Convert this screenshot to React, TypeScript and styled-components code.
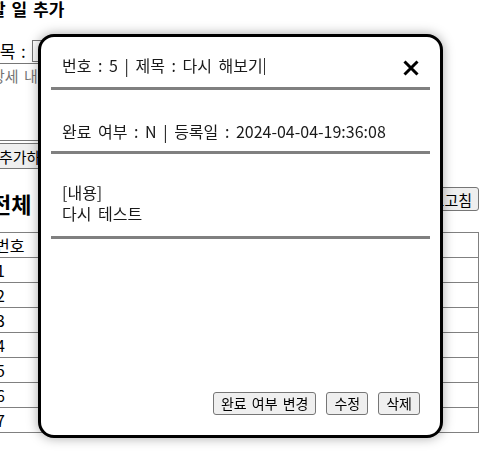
import React from "react";
import styled, { createGlobalStyle } from "styled-components";

const Global = createGlobalStyle`
  html, body { margin: 0; padding: 0; background: #fff; overflow: hidden; }
  body { font-family: "Noto Sans CJK KR", "Noto Sans", sans-serif; color: #000; }
`;

const Page = styled.div`
  margin-left: -12px;
  width: 491px;
  display: flex;
  flex-direction: column;
`;

const AddTitle = styled.h3`
  margin: 0 0 0 2px;
  font-size: 17px;
  line-height: 18px;
  font-weight: 700;
  word-spacing: 2px;
`;

const FieldRow = styled.div`
  margin-top: 22px;
  margin-left: -4px;
  display: flex;
  align-items: center;
  gap: 6px;
  font-size: 17px;
  line-height: 20px;
  word-spacing: 2px;
`;

const TextInput = styled.input`
  width: 160px;
  height: 18px;
  border: 1px solid #767676;
`;

const Area = styled.textarea`
  margin-top: 1px;
  margin-left: -6px;
  width: 200px;
  height: 74px;
  padding: 1px 8px;
  border: 1px solid #767676;
  font-family: "Noto Sans CJK KR", sans-serif;
  font-size: 15px;
  word-spacing: 2px;
  resize: none;
  &::placeholder { color: #757575; }
`;

const PlainButton = styled.button`
  font-family: "Noto Sans CJK KR", sans-serif;
  font-size: 14px;
  line-height: 17px;
  height: 23px;
  padding: 0 6px;
  border: 1px solid #767676;
  border-radius: 3px;
  background: #efefef;
  color: #000;
  white-space: nowrap;
  word-spacing: 2px;
`;

const AddButton = styled(PlainButton)`
  margin-top: 2px;
  align-self: flex-start;
  height: 26px;
  margin-left: 4px;
  font-size: 15px;
`;

const ListHead = styled.div`
  margin-top: 21px;
  display: flex;
  justify-content: space-between;
  align-items: center;
  height: 26px;
`;

const ListTitle = styled.h2`
  margin: 0 0 0 3px;
  font-size: 22px;
  line-height: 26px;
  font-weight: 700;
  word-spacing: 3px;
`;

const RefreshButton = styled(PlainButton)`
  height: 24px;
  margin-top: -8px;
  font-size: 15px;
`;

const Table = styled.table`
  margin-top: 16px;
  margin-left: 4px;
  border-collapse: collapse;
  font-size: 16px;
`;

const Th = styled.th`
  border: 1px solid #808080;
  height: 22px;
  padding: 0 2px;
  font-weight: 400;
  text-align: left;
`;

const Td = styled.td`
  border: 1px solid #808080;
  height: 23px;
  padding: 0 2px;
  white-space: nowrap;
`;

const Num = styled(Td)`
  padding-left: 3px;
`;

const Link = styled.a`
  color: #0000ee;
  text-decoration: underline;
`;

const Modal = styled.div`
  position: fixed;
  left: 38px;
  top: 34px;
  width: 399px;
  height: 398px;
  border: 3px solid #000;
  border-radius: 16px;
  background: #fff;
  box-shadow: 0 0 12px rgba(0, 0, 0, 0.35);
  display: flex;
  flex-direction: column;
  font-size: 16px;
  color: #1a1a1a;
  word-spacing: 3px;
`;

const Header = styled.div`
  height: 50px;
  box-sizing: border-box;
  padding: 18px 21px 12px 21px;
  display: flex;
  align-items: center;
  justify-content: space-between;
  line-height: 20px;
`;

const Caret = styled.span`
  display: inline-block;
  width: 1px;
  height: 17px;
  background: #333;
  vertical-align: -3px;
  margin-left: 1px;
`;

const Close = styled.button`
  border: 0;
  background: none;
  padding: 0;
  width: 16px;
  height: 16px;
  margin-top: 6px;
  margin-right: 0;
  display: flex;
`;

const Divider = styled.div`
  height: 3px;
  margin: 0 10px;
  background: #808080;
`;

const Section = styled.div<{ $top: number; $bottom: number }>`
  padding: ${(p) => p.$top}px 21px ${(p) => p.$bottom}px 21px;
  line-height: 21px;
`;

const Spacer = styled.div`
  flex: 1;
`;

const Actions = styled.div`
  display: flex;
  justify-content: flex-end;
  gap: 10px;
  padding: 0 20px 20px 0;
`;

const ActionButton = styled(PlainButton)`
  font-size: 14px;
  padding: 0 7px;
  word-spacing: 2px;
`;

const rows = [
  ["1", "테스트"],
  ["2", "테스트"],
  ["3", "테스트"],
  ["4", "잡일"],
  ["5", "다시 해보기"],
  ["6", "공부"],
  ["7", "테스트"],
];

export default function App() {
  return (
    <>
      <Global />
      <Page>
        <AddTitle>할 일 추가</AddTitle>
        <FieldRow>
          <span>제목 :</span>
          <TextInput />
        </FieldRow>
        <Area placeholder="상세 내용" />
        <AddButton>추가하기</AddButton>
        <ListHead>
          <ListTitle>전체 할 일</ListTitle>
          <RefreshButton>새로고침</RefreshButton>
        </ListHead>
        <Table>
          <thead>
            <tr>
              <Th>번호</Th>
              <Th>제목</Th>
              <Th>완료 여부</Th>
            </tr>
          </thead>
          <tbody>
            {rows.map(([n, t]) => (
              <tr key={n}>
                <Num>{n}</Num>
                <Td>
                  <Link href="#">{t}</Link>
                </Td>
                <Td>N</Td>
              </tr>
            ))}
          </tbody>
        </Table>
      </Page>
      <Modal>
        <Header>
          <span>
            번호 : 5 | 제목 : 다시 해보기
            <Caret />
          </span>
          <Close aria-label="닫기">
            <svg width="16" height="16" viewBox="0 0 16 16">
              <path d="M1.5 1.5 L14.5 14.5 M14.5 1.5 L1.5 14.5" stroke="#000" strokeWidth="3" strokeLinecap="butt" />
            </svg>
          </Close>
        </Header>
        <Divider />
        <Section $top={31} $bottom={9}>완료 여부 : N | 등록일 : 2024-04-04-19:36:08</Section>
        <Divider />
        <Section $top={28} $bottom={12}>
          <div>[내용]</div>
          <div>다시 테스트</div>
        </Section>
        <Divider />
        <Spacer />
        <Actions>
          <ActionButton>완료 여부 변경</ActionButton>
          <ActionButton>수정</ActionButton>
          <ActionButton>삭제</ActionButton>
        </Actions>
      </Modal>
    </>
  );
}
